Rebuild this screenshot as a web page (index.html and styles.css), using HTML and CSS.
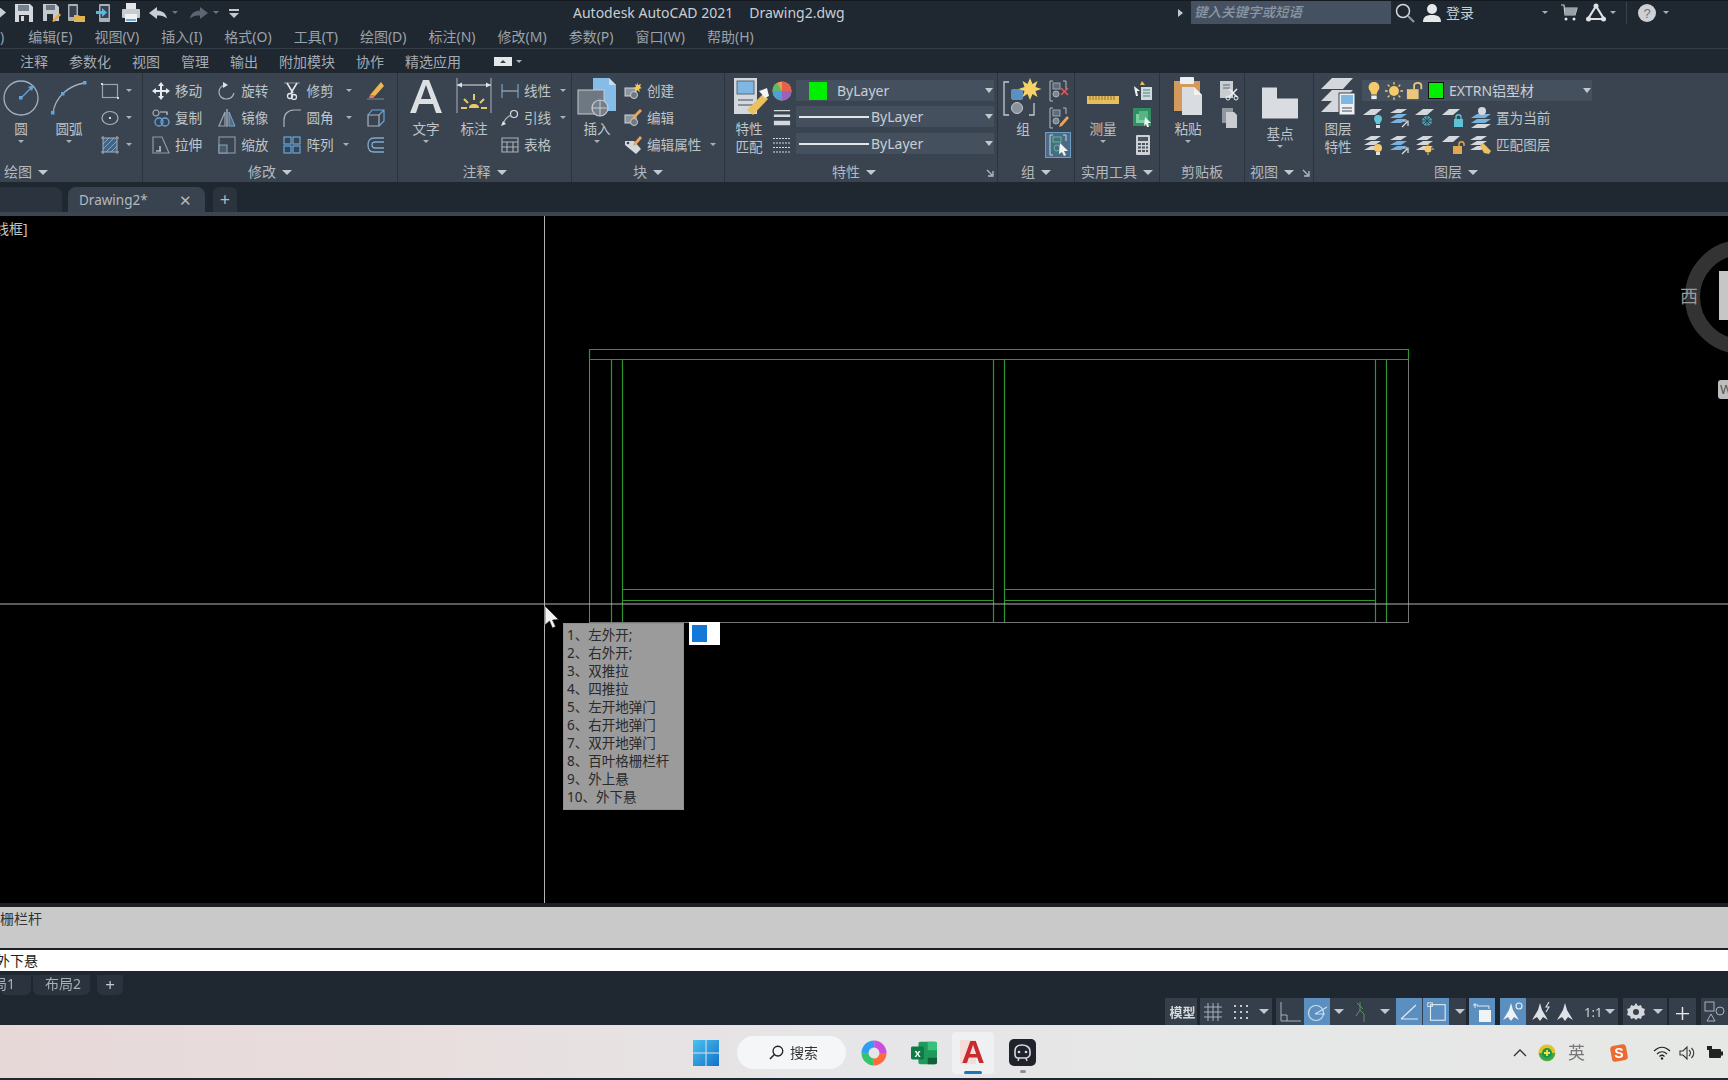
FILE: index.html
```html
<!DOCTYPE html>
<html lang="zh-CN">
<head>
<meta charset="utf-8">
<title>Autodesk AutoCAD 2021</title>
<link rel="stylesheet" href="styles.css">
</head>
<body>
<svg class="defs" aria-hidden="true">
<defs>
<symbol id="save" viewBox="0 0 20 20"><path d="M1 1h15l3 3v15H1z" fill="#d4d8dc"/><rect x="4" y="2" width="11" height="6" fill="#77818c"/><rect x="5" y="12" width="10" height="7" fill="#252c34"/><rect x="7" y="13" width="3" height="5" fill="#d4d8dc"/></symbol>
<symbol id="saveas" viewBox="0 0 20 20"><path d="M1 1h13l3 3v14H1z" fill="#c4c9ce"/><rect x="4" y="2" width="9" height="5" fill="#6c7682"/><rect x="5" y="11" width="6" height="7" fill="#252c34"/><path d="M10 18l7-8 2 2-7 7z" fill="#e8a94c"/></symbol>
<symbol id="phonef" viewBox="0 0 20 20"><rect x="2" y="1" width="10" height="17" rx="1" fill="#aab0b6"/><rect x="3.500" y="3" width="7" height="11" fill="#39434f"/><path d="M8 12h4l2 1h5v6H8z" fill="#e0b354"/></symbol>
<symbol id="phonea" viewBox="0 0 20 20"><rect x="5" y="1" width="11" height="18" rx="1" fill="#aab0b6"/><rect x="6.500" y="3" width="8" height="12" fill="#39434f"/><path d="M2 8h6V5l5 4.500-5 4.500v-3H2z" fill="#59b7e4"/></symbol>
<symbol id="print" viewBox="0 0 20 20"><rect x="5" y="0" width="10" height="6" fill="#e4e7ea"/><rect x="1" y="6" width="18" height="9" rx="1" fill="#c6cbd0"/><rect x="4" y="11" width="12" height="8" fill="#eef0f2"/><rect x="5" y="16" width="10" height="2" fill="#6aa9d8"/></symbol>
<symbol id="undo" viewBox="0 0 20 14"><path d="M9 1L1 7l8 6V9.500c4 0 7 .5 10 3-1-5-4-7.500-10-8z" fill="#c9ced3"/></symbol>
<symbol id="redo" viewBox="0 0 20 14"><path d="M11 1l8 6-8 6V9.500c-4 0-7 .5-10 3 1-5 4-7.500 10-8z" fill="#5c6570"/></symbol>
<symbol id="circle" viewBox="0 0 36 36"><circle cx="18" cy="18" r="17" fill="none" stroke="#9fb0be" stroke-width="1.300"/><path d="M18 18L30 6" stroke="#5ea6dc" stroke-width="1.300"/><path d="M31 5l-2 6-4-4z" fill="#5ea6dc"/><rect x="16" y="16" width="3.500" height="3.500" fill="#5ea6dc"/></symbol>
<symbol id="arc" viewBox="0 0 36 36"><path d="M2 33C4 18 16 6 33 3" fill="none" stroke="#9fb0be" stroke-width="1.300"/><g fill="#5ea6dc"><rect x="0" y="31" width="3.500" height="3.500"/><rect x="10" y="12" width="3.500" height="3.500"/><rect x="32" y="1" width="3.500" height="3.500"/></g></symbol>
<symbol id="rect" viewBox="0 0 18 18"><rect x="1.500" y="2.500" width="15" height="13" fill="none" stroke="#9ba4ad" stroke-width="1.200"/><g fill="#d5d9dd"><rect x="0" y="1" width="2" height="2"/><rect x="16" y="15" width="2" height="2"/></g></symbol>
<symbol id="ell" viewBox="0 0 18 18"><ellipse cx="9" cy="9" rx="8" ry="6.500" fill="none" stroke="#aab2ba" stroke-width="1.200"/><rect x="8" y="8" width="2" height="2" fill="#d5d9dd"/></symbol>
<symbol id="hatch" viewBox="0 0 18 18"><rect x="2" y="2" width="14" height="14" fill="#3f6486"/><path d="M2 8l6-6M2 13L13 2M5 16L16 5M10 16l6-6" stroke="#7fa8cb" stroke-width="1"/><path d="M2 0v18M16 0v18M0 2h18M0 16h18" stroke="#a9b1b9" stroke-width="1"/></symbol>
<symbol id="move" viewBox="0 0 18 18"><path d="M9 0l3 4h-2v4h4V6l4 3-4 3v-2h-4v4h2l-3 4-3-4h2v-4H4v2L0 9l4-3v2h4V4H6z" fill="#e8eaec"/></symbol>
<symbol id="copy" viewBox="0 0 18 18"><rect x="1" y="1" width="6" height="6" rx="3" fill="none" stroke="#a7afb7" stroke-width="1.200"/><path d="M8 3h7v3" fill="none" stroke="#c9ced3" stroke-width="1.200"/><circle cx="7" cy="13" r="4" fill="none" stroke="#64a7dc" stroke-width="1.300"/><circle cx="13" cy="13" r="4" fill="none" stroke="#64a7dc" stroke-width="1.300"/></symbol>
<symbol id="stretch" viewBox="0 0 18 18"><path d="M1 1h9l7 16H1z" fill="none" stroke="#8f99a3" stroke-width="1.200"/><path d="M4 15h5M8 10v5" stroke="#dfe2e5" stroke-width="1.200"/></symbol>
<symbol id="rotate" viewBox="0 0 18 18"><path d="M7 3C3 4 1 7 1 10c0 4 3 7 7 7 4 0 7-2 8-6" fill="none" stroke="#aab2ba" stroke-width="1.200"/><path d="M5 0l5 3-5 3z" fill="#dfe2e5"/></symbol>
<symbol id="mirror" viewBox="0 0 18 18"><path d="M7 3L1 17h6z" fill="none" stroke="#9ca6af" stroke-width="1.200"/><path d="M11 3l6 14h-6z" fill="#566c80" stroke="#7aa9d0" stroke-width="1"/><path d="M9 0v18" stroke="#d5d9dd" stroke-width="1"/></symbol>
<symbol id="scale" viewBox="0 0 18 18"><rect x="1" y="1" width="16" height="16" fill="none" stroke="#89939d" stroke-width="1.200"/><rect x="1" y="9" width="8" height="8" fill="#4b5a69" stroke="#89a5bf" stroke-width="1"/></symbol>
<symbol id="trim" viewBox="0 0 18 18"><path d="M1 1h16" stroke="#8f99a3"/><path d="M4 1l6 10M14 1L8 11" stroke="#e2e5e8" stroke-width="1.600"/><circle cx="7" cy="14" r="2.500" fill="none" stroke="#e2e5e8" stroke-width="1.300"/><circle cx="11" cy="15" r="2.500" fill="none" stroke="#e2e5e8" stroke-width="1.300"/></symbol>
<symbol id="fillet" viewBox="0 0 18 18"><path d="M1 18V11C1 5 5 1 11 1h7" fill="none" stroke="#aab2ba" stroke-width="1.200"/></symbol>
<symbol id="array" viewBox="0 0 18 18"><g fill="none" stroke="#64a7dc" stroke-width="1.200"><rect x="1" y="1" width="7" height="7"/><rect x="10" y="1" width="7" height="7"/><rect x="1" y="10" width="7" height="7"/><rect x="10" y="10" width="7" height="7"/></g></symbol>
<symbol id="eraser" viewBox="0 0 18 18"><path d="M14 0l3 4-9 10-5-1z" fill="#f0b54e"/><path d="M3 13l5 1-2 2H2z" fill="#e9766a"/><path d="M0 17h17" stroke="#7e8790"/></symbol>
<symbol id="cube" viewBox="0 0 18 18"><path d="M1 6h11v11H1z" fill="none" stroke="#aab2ba" stroke-width="1.200"/><path d="M1 6l4-5h12v11l-5 5M12 6l5-5" fill="none" stroke="#64a7dc" stroke-width="1.200"/></symbol>
<symbol id="offset" viewBox="0 0 18 18"><path d="M17 2H7C3 2 1 5 1 9s2 7 6 7h10M17 6H8c-2 0-3 1-3 3s1 3 3 3h9" fill="none" stroke="#7fa9cc" stroke-width="1.300"/></symbol>
<symbol id="txtA" viewBox="0 0 40 40"><path d="M17 3h6l13 33h-6l-3-9H13l-3 9H4zM15 22h10L20 8z" fill="#dde0e3" fill-rule="evenodd"/></symbol>
<symbol id="dim" viewBox="0 0 40 40"><path d="M3 1v35M37 1v35" stroke="#aab2ba"/><path d="M3 8h34" stroke="#dfe2e5"/><path d="M3 8l5-2.500v5zM37 8l-5-2.500v5z" fill="#dfe2e5"/><g stroke="#ecc766" stroke-width="2"><path d="M20 17v6M10 22l4 4M30 22l-4 4M7 31h6M27 31h6"/></g><path d="M15 31c0-3 2-4 5-4s5 1 5 4z" fill="#ecc766"/></symbol>
<symbol id="lin" viewBox="0 0 18 18"><path d="M1 2v14M17 2v14" stroke="#72a4cc" stroke-width="1.200"/><path d="M1 9h16" stroke="#a7afb7" stroke-width="1.200"/></symbol>
<symbol id="leader" viewBox="0 0 18 18"><circle cx="13" cy="5" r="3.500" fill="none" stroke="#dfe2e5" stroke-width="1.200"/><path d="M2 16c1-5 4-8 8-10" fill="none" stroke="#aab2ba" stroke-width="1.200"/><path d="M0 17l2-5 3 3z" fill="#dfe2e5"/></symbol>
<symbol id="table" viewBox="0 0 18 18"><path d="M1 2h16v14H1zM1 6h16M1 11h16M6 6v10M12 6v10" fill="none" stroke="#aab2ba" stroke-width="1.100"/></symbol>
<symbol id="insert" viewBox="0 0 44 40"><path d="M18 1h16l7 7v26H18z" fill="#86bce8"/><path d="M34 1l7 7h-7z" fill="#c4dff4"/><rect x="3" y="13" width="26" height="24" fill="#6e7882" stroke="#c5cad0"/><circle cx="25" cy="31" r="8" fill="#757f89" stroke="#c9ced3" stroke-width="1.200"/><path d="M25 23v16M17 31h16" stroke="#c9ced3"/></symbol>
<symbol id="create" viewBox="0 0 18 18"><rect x="1" y="6" width="11" height="8" fill="#8c959e" stroke="#d0d4d8"/><circle cx="10" cy="13" r="3.500" fill="#6f7882" stroke="#c9ced3"/><path d="M13 0l1 3 3-1-1 3 2 1-3 1 1 3-3-2-2 2V7l-2-1 3-1-1-3 2 1z" fill="#f6ca58"/></symbol>
<symbol id="editb" viewBox="0 0 18 18"><rect x="1" y="6" width="11" height="8" fill="#8c959e" stroke="#d0d4d8"/><circle cx="10" cy="13" r="3.500" fill="#6f7882" stroke="#c9ced3"/><path d="M16 0l2 2-7 7-3 1 1-3z" fill="#eea55a"/></symbol>
<symbol id="attr" viewBox="0 0 18 18"><path d="M1 5h9l7 8-5 5-11-9z" fill="#d4d8dc"/><circle cx="4" cy="7" r="1.300" fill="#39434f"/><path d="M16 0l2 2-6 7-3 1 1-3z" fill="#eea55a"/></symbol>
<symbol id="match" viewBox="0 0 36 40"><rect x="1" y="1" width="23" height="36" fill="#d4d8dc"/><rect x="4" y="4" width="17" height="13" fill="#7fb7e4" stroke="#5a6672"/><path d="M5 23h15M5 28h15" stroke="#444d57"/><path d="M14 33l16-16 5 5-15 16z" fill="#eac061"/><path d="M26 14l8-3 2 8-4 2z" fill="#f4f5f6"/></symbol>
<symbol id="wheel" viewBox="0 0 20 20"><circle cx="10" cy="10" r="9.500" fill="#e9a14c"/><path d="M10 10V.5A9.500 9.500 0 0 1 19.500 10z" fill="#e5604f"/><path d="M10 10h9.500A9.500 9.500 0 0 1 10 19.500z" fill="#9a62b8"/><path d="M10 10v9.500A9.500 9.500 0 0 1 .5 10z" fill="#4d9fd8"/><path d="M10 10H.5A9.500 9.500 0 0 1 5 1.800z" fill="#5fb86a"/></symbol>
<symbol id="lw" viewBox="0 0 18 20"><path d="M0 1h18v1.500H0zM0 6h18v3H0zM0 13h18v5H0z" fill="#d4d8dc"/></symbol>
<symbol id="lt" viewBox="0 0 18 16"><path d="M0 1.500h18M0 6h18M0 10.500h18M0 15h18" stroke="#d4d8dc" stroke-dasharray="2 1"/></symbol>
<symbol id="group" viewBox="0 0 40 40"><path d="M6 5H1v33h5M26 38h5v-12" fill="none" stroke="#c4c9ce" stroke-width="1.300"/><rect x="8" y="12" width="12" height="11" rx="2" fill="#5c90c0"/><circle cx="14" cy="31" r="5.500" fill="#8a939c" stroke="#c4c9ce"/><path d="M27 1l2.500 6 5-3-2 6 6 2-6 2 2 6-5-3-2.500 6-2.500-6-5 3 2-6-6-2 6-2-2-6 5 3z" fill="#f6d167"/></symbol>
<symbol id="gungrp" viewBox="0 0 24 24"><path d="M7 2H4v20h3M17 2h3v8" fill="none" stroke="#b4bac0"/><rect x="7" y="4" width="7" height="6" fill="#5a6b7c" stroke="#9ba4ad"/><circle cx="10" cy="15" r="3" fill="#7d8690" stroke="#a9b1b8"/><path d="M15 9l7 7M22 9l-7 7" stroke="#e05757" stroke-width="1.600"/></symbol>
<symbol id="editgrp" viewBox="0 0 24 24"><path d="M7 2H4v20h3M17 2h3v6" fill="none" stroke="#b4bac0"/><rect x="7" y="4" width="7" height="6" fill="#5a6b7c" stroke="#9ba4ad"/><circle cx="10" cy="15" r="3" fill="#7d8690" stroke="#a9b1b8"/><path d="M21 10l2 2-7 8-3 1 1-3z" fill="#eea55a"/></symbol>
<symbol id="selgrp" viewBox="0 0 24 24"><path d="M7 2H4v20h3M17 2h3v6" fill="none" stroke="#c4d4df"/><rect x="7" y="4" width="8" height="5" fill="none" stroke="#58bf8a"/><circle cx="11" cy="15" r="3" fill="none" stroke="#58bf8a"/><path d="M14 10l8 8-4 0 2 4-2 1-2-4-3 2z" fill="#f2f3f4"/></symbol>
<symbol id="ruler" viewBox="0 0 32 8"><rect width="32" height="8" fill="#e8bd5e"/><path d="M3 0v4M6 0v4M9 0v4M12 0v4M15 0v4M18 0v4M21 0v4M24 0v4M27 0v4" stroke="#8e7232"/></symbol>
<symbol id="qsel" viewBox="0 0 20 20"><rect x="8" y="6" width="11" height="13" fill="#d4d8dc"/><path d="M10 9h7M10 12h7M10 15h7" stroke="#2e8f7c"/><path d="M1 5l6 5-3 0 1 5-2 0-1-4z" fill="#eef0f2"/><path d="M9 0l-2 4 5 0z" fill="#e8bd5e"/></symbol>
<symbol id="qlist" viewBox="0 0 20 20"><rect x="0" y="0" width="18" height="18" fill="#2f8f63"/><rect x="3" y="6" width="9" height="9" fill="#7ad0a2"/><rect x="6" y="3" width="9" height="9" fill="#58b484"/><path d="M12 9l6 6-3 0 1 4-2 0-1-3-2 2z" fill="#f2f3f4"/></symbol>
<symbol id="calc" viewBox="0 0 20 20"><rect x="3" y="0" width="14" height="20" rx="1" fill="#cdd1d5"/><rect x="5" y="2" width="10" height="4" fill="#4c5560"/><path d="M5 9h3M9 9h3M13 9h2M5 12.500h3M9 12.500h3M13 12.500h2M5 16h3M9 16h3M13 16h2" stroke="#4c5560" stroke-width="2"/></symbol>
<symbol id="paste" viewBox="0 0 36 40"><rect x="4" y="4" width="26" height="30" fill="#d49a5c"/><rect x="10" y="0" width="14" height="7" rx="1" fill="#eceef0"/><path d="M12 10h12l8 8v20H12z" fill="#d9dce0"/><path d="M24 10l8 8h-8z" fill="#f0f2f3"/></symbol>
<symbol id="cut" viewBox="0 0 20 20"><rect x="1" y="0" width="13" height="17" fill="#c9cdd2"/><path d="M4 4h7M4 7h7" stroke="#5b6570"/><path d="M10 8l8 8M18 8l-8 8" stroke="#eef0f2" stroke-width="1.500"/><circle cx="9" cy="17" r="2" fill="none" stroke="#eef0f2"/><circle cx="17" cy="17" r="2" fill="none" stroke="#eef0f2"/></symbol>
<symbol id="copyc" viewBox="0 0 20 20"><rect x="3" y="0" width="11" height="15" fill="#8f98a1"/><path d="M7 4h8l3 3v13H7z" fill="#c9cdd2"/></symbol>
<symbol id="base" viewBox="0 0 40 44"><path d="M2 10h15v11h21v20H2z" fill="#d9dce0"/></symbol>
<symbol id="lprops" viewBox="0 0 40 40"><g fill="#d4d8dc"><path d="M14 1h21l-10 11H3z"/><path d="M14 13h21l-10 11H3z"/><path d="M14 24h21l-10 11H3z"/></g><rect x="21" y="16" width="16" height="22" fill="#eef0f2" stroke="#3a4450"/><rect x="23" y="18" width="12" height="9" fill="#7fb7e4"/><path d="M24 31h10M24 34h10" stroke="#444d57"/></symbol>
<symbol id="corner" viewBox="0 0 8 8"><path d="M1 1l5 5M7 2v5H2" fill="none" stroke="#b4b9bf" stroke-width="1.300"/></symbol>
<symbol id="l-blue" viewBox="0 0 26 24"><g fill="#d4d8dc"><path d="M10 3h10l-6 4H3z"/></g><g fill="#79b2de"><path d="M10 8h10l-6 4H3z"/><path d="M10 13h10l-6 4H3z"/></g><path d="M15 21l5-5M16 15h5v5" fill="none" stroke="#dfe2e5" stroke-width="1.200"/></symbol>
<symbol id="l-bulb-b" viewBox="0 0 26 24"><path d="M10 3h11l-7 6H2z" fill="#d4d8dc"/><path d="M17 9c3 0 4 2 4 4 0 2-2 3-2 5h-4c0-2-2-3-2-5 0-2 1-4 4-4z" fill="#63c4d8"/><rect x="15" y="19" width="4" height="3" fill="#dfe2e5"/></symbol>
<symbol id="l-fl" viewBox="0 0 26 24"><path d="M10 3h11l-7 6H2z" fill="#d4d8dc"/><circle cx="14" cy="15" r="5" fill="#47a5b8"/><path d="M14 9v12M8 15h12M10 11l8 8M18 11l-8 8" stroke="#39434f"/></symbol>
<symbol id="l-lock-b" viewBox="0 0 26 24"><path d="M8 3h11l-7 6H1z" fill="#d4d8dc"/><rect x="13" y="13" width="9" height="8" fill="#5fc1d6"/><path d="M15 13v-2c0-3 5-3 5 0v2" fill="none" stroke="#5fc1d6" stroke-width="1.400"/></symbol>
<symbol id="l-user" viewBox="0 0 26 24"><g fill="#79b2de"><path d="M8 8h14l-6 4H2z"/><path d="M8 13h14l-6 4H2z"/></g><path d="M8 18h14l-6 4H2z" fill="#d4d8dc"/><circle cx="13" cy="5" r="4" fill="#d4d8dc"/></symbol>
<symbol id="l-bulb-y" viewBox="0 0 26 24"><g fill="#d4d8dc"><path d="M10 3h10l-6 4H3z"/><path d="M10 8h10l-6 4H3z"/><path d="M10 13h10l-6 4H3z"/></g><circle cx="17" cy="15" r="4" fill="#f6ca6b"/><rect x="15" y="19" width="4" height="3" fill="#dfe2e5"/></symbol>
<symbol id="l-sun" viewBox="0 0 26 24"><g fill="#d4d8dc"><path d="M10 3h10l-6 4H3z"/><path d="M10 8h10l-6 4H3z"/><path d="M10 13h10l-6 4H3z"/></g><circle cx="15" cy="16" r="3.500" fill="#f6ca6b"/><path d="M15 10v2M15 20v2M9 16h2M19 16h2" stroke="#f6ca6b"/></symbol>
<symbol id="l-lock-o" viewBox="0 0 26 24"><path d="M8 3h11l-7 6H1z" fill="#d4d8dc"/><rect x="12" y="13" width="9" height="8" fill="#e3a652"/><path d="M18 13v-2c0-3 5-3 5 0v2" fill="none" stroke="#e3a652" stroke-width="1.400"/></symbol>
<symbol id="l-pen" viewBox="0 0 26 24"><g fill="#d4d8dc"><path d="M8 3h10l-6 4H1z"/><path d="M8 8h10l-6 4H1z"/><path d="M8 13h10l-6 4H1z"/></g><path d="M11 13l3-3 8 8-2 3-5-1z" fill="#eac061"/></symbol>
<symbol id="sun" viewBox="0 0 20 20"><circle cx="10" cy="10" r="5.500" fill="#f6ca6b"/><path d="M10 0v3M10 17v3M0 10h3M17 10h3M3 3l2 2M15 15l2 2M3 17l2-2M15 5l2-2" stroke="#f6ca6b" stroke-width="1.400"/></symbol>
<symbol id="bulb" viewBox="0 0 20 20"><path d="M10 0c4 0 6 3 6 6 0 3-3 4-3 8H7c0-4-3-5-3-8 0-3 2-6 6-6z" fill="#f6ca6b"/><rect x="7" y="15" width="6" height="4" fill="#eef0f2"/></symbol>
<symbol id="lock" viewBox="0 0 20 20"><rect x="1" y="8" width="13" height="11" fill="#eac77c"/><path d="M9 8V4c0-4 8-4 8 0v4" fill="none" stroke="#eac77c" stroke-width="2"/></symbol>
<symbol id="help" viewBox="0 0 20 20"><circle cx="10" cy="10" r="9" fill="#cdd1d5"/><text x="10" y="15" text-anchor="middle" font-size="13" font-family="Liberation Sans" fill="#6a727b">?</text></symbol>
<symbol id="user" viewBox="0 0 20 20"><circle cx="10" cy="6" r="5" fill="#e6e8ea"/><path d="M1 19c0-6 4-7 9-7s9 1 9 7z" fill="#e6e8ea"/></symbol>
<symbol id="mag" viewBox="0 0 20 20"><circle cx="8" cy="8" r="6.500" fill="none" stroke="#d4d8dc" stroke-width="1.500"/><path d="M13 13l6 6" stroke="#8b939b" stroke-width="2.200"/></symbol>
<symbol id="cart" viewBox="0 0 18 18"><path d="M1 1h3l1 10h10l2-7H5" fill="none" stroke="#c6cbd0" stroke-width="1.200"/><path d="M5 4h12l-2 7H5z" fill="#98a0a8"/><circle cx="6" cy="15" r="1.500" fill="#e2e5e8"/><circle cx="14" cy="15" r="1.500" fill="#e2e5e8"/></symbol>
<symbol id="a360" viewBox="0 0 20 20"><path d="M10 3L2 16h16z" fill="none" stroke="#dfe2e5" stroke-width="2.200"/><circle cx="10" cy="3" r="2.500" fill="#dfe2e5"/><circle cx="2.500" cy="16" r="2.500" fill="#dfe2e5"/><circle cx="17.500" cy="16" r="2.500" fill="#dfe2e5"/></symbol>
<symbol id="s-grid" viewBox="0 0 20 20"><path d="M5 1v18M10 1v18M15 1v18M1 5h18M1 10h18M1 15h18" stroke="#aab2ba"/></symbol>
<symbol id="s-snap" viewBox="0 0 20 20"><path d="M3 3h2v2H3zM9 3h2v2H9zM15 3h2v2h-2zM3 9h2v2H3zM9 9h2v2H9zM15 9h2v2h-2zM3 15h2v2H3zM9 15h2v2H9zM15 15h2v2h-2z" fill="#c4c9ce"/></symbol>
<symbol id="s-ortho" viewBox="0 0 22 22"><path d="M2 1v19h20M2 14h6v6" fill="none" stroke="#aab2ba"/></symbol>
<symbol id="s-polar" viewBox="0 0 22 22"><circle cx="10" cy="12" r="7.500" fill="none" stroke="#cfe0ee" stroke-width="1.200"/><path d="M9 13L21 6M9 13h10" stroke="#cfe0ee" stroke-width="1.200"/></symbol>
<symbol id="s-iso" viewBox="0 0 22 22"><path d="M10 1v8l-4 6M10 9l4 4v8M7 2l6 6" stroke="#5d8f68" fill="none"/></symbol>
<symbol id="s-ang" viewBox="0 0 22 22"><path d="M3 18L18 4M3 18h17" stroke="#dfeaf3" fill="none" stroke-width="1.200"/></symbol>
<symbol id="s-box" viewBox="0 0 24 22"><rect x="6" y="3" width="16" height="17" fill="none" stroke="#dfeaf3" stroke-width="1.200"/><rect x="3" y="1" width="5" height="4" fill="none" stroke="#dfeaf3"/></symbol>
<symbol id="s-sel" viewBox="0 0 20 20"><path d="M1 3h5M3 1v5" stroke="#dfeaf3"/><path d="M5 4h12v3" stroke="#dfeaf3" fill="none"/><rect x="7" y="8" width="12" height="12" fill="#f0f3f5"/></symbol>
<symbol id="s-anno" viewBox="0 0 22 22"><path d="M9 2l2 7 6 10-5-3-3 4-3-4-5 3 6-10z" fill="#dfe3e7"/></symbol>
<symbol id="s-anno-c" viewBox="0 0 22 22"><path d="M9 2l2 7 6 10-5-3-3 4-3-4-5 3 6-10z" fill="#eef2f5"/><circle cx="17" cy="5" r="3" fill="none" stroke="#eef2f5" stroke-width="1.100"/></symbol>
<symbol id="s-anno-z" viewBox="0 0 22 22"><path d="M9 2l2 7 6 10-5-3-3 4-3-4-5 3 6-10z" fill="#dfe3e7"/><path d="M18 1l-3 5h3l-3 5" fill="none" stroke="#dfe3e7" stroke-width="1.100"/></symbol>
<symbol id="s-gear" viewBox="0 0 20 20"><path d="M10 1l2 3 3-1 1 3 3 1-1 3 1 3-3 1-1 3-3-1-2 2-2-2-3 1-1-3-3-1 1-3-1-3 3-1 1-3 3 1z" fill="#d4d8dc"/><circle cx="10" cy="10" r="3" fill="#36404c"/></symbol>
<symbol id="s-shape" viewBox="0 0 22 22"><rect x="1" y="1" width="9" height="9" fill="none" stroke="#aab2ba"/><circle cx="16" cy="10" r="4" fill="none" stroke="#aab2ba"/><path d="M7 13l4 7H3z" fill="none" stroke="#aab2ba"/></symbol>
</defs>
</svg>

<div class="app">
  <header class="titlebar">
    <div class="qat">
      <span class="frag"></span>
      <svg class="qi"><use href="#save"/></svg>
      <svg class="qi"><use href="#saveas"/></svg>
      <svg class="qi qi-pull"><use href="#phonef"/></svg>
      <svg class="qi"><use href="#phonea"/></svg>
      <svg class="qi qi-tight"><use href="#print"/></svg>
      <svg class="qu"><use href="#undo"/></svg><i class="car car-sm dim undo-car"></i>
      <svg class="qu"><use href="#redo"/></svg><i class="car car-sm dim"></i>
      <span class="qmore"></span>
    </div>
    <div class="apptitle"><span>Autodesk AutoCAD 2021</span><span>Drawing2.dwg</span></div>
    <div class="tright">
      <i class="tri-r"></i>
      <div class="searchbox">键入关键字或短语</div>
      <svg class="i20 mag"><use href="#mag"/></svg>
      <svg class="i20 usr"><use href="#user"/></svg>
      <span class="login">登录</span>
      <i class="car car-sm login-car"></i>
      <svg class="i18 crt"><use href="#cart"/></svg>
      <svg class="i20 a3"><use href="#a360"/></svg>
      <i class="car car-sm a3-car"></i>
      <span class="tsep"></span>
      <svg class="i20 hlp"><use href="#help"/></svg>
      <i class="car car-sm hlp-car"></i>
    </div>
  </header>

  <nav class="menubar">
    <span class="menu-frag">)</span><span>编辑(E)</span><span>视图(V)</span><span>插入(I)</span><span>格式(O)</span><span>工具(T)</span><span>绘图(D)</span><span>标注(N)</span><span>修改(M)</span><span>参数(P)</span><span>窗口(W)</span><span>帮助(H)</span>
  </nav>

  <nav class="ribbontabs">
    <span>注释</span><span>参数化</span><span>视图</span><span>管理</span><span>输出</span><span>附加模块</span><span>协作</span><span>精选应用</span>
    <span class="tabpill"><i></i></span><i class="car car-sm"></i>
  </nav>

  <section class="ribbon">
    <div class="panel p-draw">
      <div class="pbody">
        <div class="big"><svg class="bigi"><use href="#circle" width="36" height="36" x="2" y="3"/></svg><b>圆</b><i class="car car-sm"></i></div>
        <div class="big ml8"><svg class="bigi"><use href="#arc" width="36" height="36" x="2" y="3"/></svg><b>圆弧</b><i class="car car-sm"></i></div>
        <div class="rows ml12">
          <div class="r"><svg class="i18"><use href="#rect"/></svg><i class="car car-sm ml7"></i></div>
          <div class="r"><svg class="i18"><use href="#ell"/></svg><i class="car car-sm ml7"></i></div>
          <div class="r"><svg class="i18"><use href="#hatch"/></svg><i class="car car-sm ml7"></i></div>
        </div>
      </div>
      <div class="ptitle left"><span>绘图</span><i class="car"></i></div>
    </div>
    <div class="panel p-mod">
      <div class="pbody">
        <div class="rows">
          <div class="r"><svg class="i18"><use href="#move"/></svg><span>移动</span></div>
          <div class="r"><svg class="i18"><use href="#copy"/></svg><span>复制</span></div>
          <div class="r"><svg class="i18"><use href="#stretch"/></svg><span>拉伸</span></div>
        </div>
        <div class="rows ml16">
          <div class="r"><svg class="i18"><use href="#rotate"/></svg><span>旋转</span></div>
          <div class="r"><svg class="i18"><use href="#mirror"/></svg><span>镜像</span></div>
          <div class="r"><svg class="i18"><use href="#scale"/></svg><span>缩放</span></div>
        </div>
        <div class="rows ml15">
          <div class="r"><svg class="i18"><use href="#trim"/></svg><span>修剪</span><i class="car car-sm ml12"></i></div>
          <div class="r"><svg class="i18"><use href="#fillet"/></svg><span>圆角</span><i class="car car-sm ml12"></i></div>
          <div class="r"><svg class="i18"><use href="#array"/></svg><span>阵列</span><i class="car car-sm ml9"></i></div>
        </div>
        <div class="rows ml15">
          <div class="r"><svg class="i18"><use href="#eraser"/></svg></div>
          <div class="r"><svg class="i18"><use href="#cube"/></svg></div>
          <div class="r"><svg class="i18"><use href="#offset"/></svg></div>
        </div>
      </div>
      <div class="ptitle"><span>修改</span><i class="car"></i></div>
    </div>
    <div class="panel p-ann">
      <div class="pbody">
        <div class="big"><svg class="bigi"><use href="#txtA"/></svg><b>文字</b><i class="car car-sm"></i></div>
        <div class="big ml8"><svg class="bigi"><use href="#dim"/></svg><b>标注</b></div>
        <div class="rows ml7">
          <div class="r"><svg class="i18"><use href="#lin"/></svg><span>线性</span><i class="car car-sm ml9"></i></div>
          <div class="r"><svg class="i18"><use href="#leader"/></svg><span>引线</span><i class="car car-sm ml9"></i></div>
          <div class="r"><svg class="i18"><use href="#table"/></svg><span>表格</span></div>
        </div>
      </div>
      <div class="ptitle"><span>注释</span><i class="car"></i></div>
    </div>
    <div class="panel p-blk">
      <div class="pbody">
        <div class="big bw44"><svg class="bigi w44"><use href="#insert"/></svg><b>插入</b><i class="car car-sm"></i></div>
        <div class="rows ml5">
          <div class="r"><svg class="i18"><use href="#create"/></svg><span>创建</span></div>
          <div class="r"><svg class="i18"><use href="#editb"/></svg><span>编辑</span></div>
          <div class="r"><svg class="i18"><use href="#attr"/></svg><span>编辑属性</span><i class="car car-sm ml9"></i></div>
        </div>
      </div>
      <div class="ptitle"><span>块</span><i class="car"></i></div>
    </div>
    <div class="panel p-prop">
      <div class="pbody">
        <div class="big two"><svg class="bigi"><use href="#match" width="36" height="40" x="4"/></svg><b>特性<br>匹配</b></div>
        <div class="rows ml4">
          <div class="r"><svg class="i20 wheelfit"><use href="#wheel"/></svg></div>
          <div class="r"><svg class="i18"><use href="#lw"/></svg></div>
          <div class="r"><svg class="i18"><use href="#lt"/></svg></div>
        </div>
        <div class="rows ml3">
          <div class="r"><div class="combo c-prop"><i class="swatch"></i><span class="cname">ByLayer</span><i class="car combo-car"></i></div></div>
          <div class="r"><div class="combo c-prop up"><i class="cline"></i><span>ByLayer</span><i class="car combo-car"></i></div></div>
          <div class="r"><div class="combo c-prop up"><i class="cline"></i><span>ByLayer</span><i class="car combo-car"></i></div></div>
        </div>
      </div>
      <div class="ptitle withcorner title-prop"><span>特性</span><i class="car"></i><svg class="corner"><use href="#corner"/></svg></div>
    </div>
    <div class="panel p-grp">
      <div class="pbody">
        <div class="big"><svg class="bigi"><use href="#group"/></svg><b>组</b></div>
        <div class="rows ml3">
          <div class="r"><svg class="i24"><use href="#gungrp"/></svg></div>
          <div class="r"><svg class="i24"><use href="#editgrp"/></svg></div>
          <div class="r"><svg class="i24 active"><use href="#selgrp"/></svg></div>
        </div>
      </div>
      <div class="ptitle"><span>组</span><i class="car"></i></div>
    </div>
    <div class="panel p-utl">
      <div class="pbody">
        <div class="big"><svg class="bigi"><use href="#ruler" width="32" height="8" x="4" y="19"/></svg><b>测量</b><i class="car car-sm"></i></div>
        <div class="rows ml10">
          <div class="r"><svg class="i20"><use href="#qsel"/></svg></div>
          <div class="r"><svg class="i20"><use href="#qlist"/></svg></div>
          <div class="r"><svg class="i20"><use href="#calc"/></svg></div>
        </div>
      </div>
      <div class="ptitle"><span>实用工具</span><i class="car"></i></div>
    </div>
    <div class="panel p-clp">
      <div class="pbody">
        <div class="big bw36"><svg class="bigi w36"><use href="#paste"/></svg><b>粘贴</b><i class="car car-sm"></i></div>
        <div class="rows ml13">
          <div class="r"><svg class="i20"><use href="#cut"/></svg></div>
          <div class="r"><svg class="i20"><use href="#copyc"/></svg></div>
        </div>
      </div>
      <div class="ptitle"><span>剪贴板</span></div>
    </div>
    <div class="panel p-vw">
      <div class="pbody">
        <div class="big tall"><svg class="bigi h44"><use href="#base"/></svg><b>基点</b><i class="car car-sm"></i></div>
      </div>
      <div class="ptitle withcorner"><span>视图</span><i class="car"></i><svg class="corner"><use href="#corner"/></svg></div>
    </div>
    <div class="panel p-lay">
      <div class="pbody">
        <div class="big two"><svg class="bigi"><use href="#lprops"/></svg><b>图层<br>特性</b></div>
        <div class="rows ml3">
          <div class="r"><div class="combo c-lay">
            <svg class="i18 ml4"><use href="#bulb"/></svg>
            <svg class="i18 ml2"><use href="#sun"/></svg>
            <svg class="i18 ml3"><use href="#lock"/></svg>
            <i class="swatch sw-lay"></i><span class="layname">EXTRN铝型材</span><i class="car combo-car"></i>
          </div></div>
          <div class="r">
            <svg class="ly"><use href="#l-bulb-b"/></svg><svg class="ly"><use href="#l-blue"/></svg><svg class="ly"><use href="#l-fl"/></svg><svg class="ly ml2"><use href="#l-lock-b"/></svg><svg class="ly ml2"><use href="#l-user"/></svg><span class="lt">置为当前</span>
          </div>
          <div class="r">
            <svg class="ly"><use href="#l-bulb-y"/></svg><svg class="ly"><use href="#l-blue"/></svg><svg class="ly"><use href="#l-sun"/></svg><svg class="ly ml2"><use href="#l-lock-o"/></svg><svg class="ly ml2"><use href="#l-pen"/></svg><span class="lt">匹配图层</span>
          </div>
        </div>
      </div>
      <div class="ptitle left lay-title"><span>图层</span><i class="car"></i></div>
    </div>
  </section>

  <div class="doctabs">
    <span class="dtab-prev"></span>
    <span class="dtab"><span>Drawing2*</span><em>✕</em></span>
    <span class="dtab-add">+</span>
  </div>

  <main class="viewport">
    <svg class="canvas" viewBox="0 216 1728 687" width="1728" height="687">
      <g fill="none" stroke="#767676" stroke-width="1">
        <path d="M589.500 359.500V622M1408.500 359.500V622M589 622.500H1409"/>
      </g>
      <g fill="none" stroke="#2f9430" stroke-width="1.200">
        <path d="M589.500 359.500V349.500H1408.500V359.500H589.500"/>
        <path d="M611.500 359.500V622M622.500 359.500V622"/>
        <path d="M993.500 359.500V622M1004.500 359.500V622"/>
        <path d="M1375.500 359.500V622M1386.500 359.500V622"/>
        <path d="M622.500 589.500H993.500M622.500 600.500H993.500M1004.500 589.500H1375.500M1004.500 600.500H1375.500"/>
      </g>
      <path d="M544.500 216V903M0 604H1728" stroke="#b4b4b4" stroke-width="1"/>
      <circle cx="1742" cy="297" r="49.500" fill="none" stroke="#333" stroke-width="15"/>
      <rect x="1719" y="271" width="20" height="49" fill="#c6c6c6"/>
      <rect x="1718" y="380" width="20" height="19" rx="3" fill="#bdbdbd"/>
      <text class="w-label" x="1720" y="394">W</text>
      <text class="compass" x="1680" y="303">西</text>
      <path d="M545 606v19l4.500-4 3 7 3-1.500-3-6.500 6-.5z" fill="#f2f2f2" stroke="#222" stroke-width=".6"/>
    </svg>
    <div class="vp-label">线框]</div>
    <div class="dynlist">
      <div>1、左外开;</div><div>2、右外开;</div><div>3、双推拉</div><div>4、四推拉</div><div>5、左开地弹门</div><div>6、右开地弹门</div><div>7、双开地弹门</div><div>8、百叶格栅栏杆</div><div>9、外上悬</div><div>10、外下悬</div>
    </div>
    <div class="dynbox"><i></i></div>
  </main>

  <section class="cmd">
    <div class="cmd-hist">栅栏杆</div>
    <div class="cmd-input"><span>外下悬</span></div>
  </section>

  <section class="bottom">
    <div class="layouttabs">
      <span class="lt-tab first">局1</span><span class="lt-tab">布局2</span><span class="lt-add">+</span>
    </div>
    <div class="status">
      <div class="sg g-model"><span>模型</span></div>
      <div class="sg g-grid"><svg class="i20"><use href="#s-grid"/></svg><svg class="i20 ml8"><use href="#s-snap"/></svg><i class="car ml8"></i></div>
      <div class="sg g-draft">
        <svg class="s22 ml3"><use href="#s-ortho"/></svg>
        <span class="hl ml3"><svg class="s22"><use href="#s-polar"/></svg></span><i class="car ml4"></i>
        <svg class="s22 ml6"><use href="#s-iso"/></svg><i class="car ml8"></i>
        <span class="hl ml6"><svg class="s22"><use href="#s-ang"/></svg></span>
        <span class="hl ml1"><svg class="s22"><use href="#s-box"/></svg></span><i class="car ml6"></i>
      </div>
      <div class="sg g-sel"><span class="hl"><svg class="i20"><use href="#s-sel"/></svg></span></div>
      <div class="sg g-anno">
        <span class="hl"><svg class="s22"><use href="#s-anno-c"/></svg></span>
        <svg class="s22 ml5"><use href="#s-anno-z"/></svg>
        <svg class="s22 ml3"><use href="#s-anno"/></svg>
        <span class="ratio">1:1</span><i class="car ml3"></i>
      </div>
      <div class="sg g-gear"><svg class="i20 ml3"><use href="#s-gear"/></svg><i class="car ml7"></i></div>
      <div class="sg g-plus"><span>+</span></div>
      <div class="sg g-last"><svg class="s22"><use href="#s-shape"/></svg></div>
    </div>
  </section>

  <footer class="taskbar">
    <svg class="win" viewBox="0 0 26 26"><defs><linearGradient id="wg" x1="0" y1="0" x2="1" y2="1"><stop offset="0" stop-color="#4cc2f1"/><stop offset="1" stop-color="#0f72c8"/></linearGradient></defs><path d="M0 0h12.500v12.500H0zM13.500 0H26v12.500H13.500zM0 13.500h12.500V26H0zM13.500 13.500H26V26H13.500z" fill="url(#wg)"/></svg>
    <div class="tsearch"><svg class="tmag" viewBox="0 0 16 16"><circle cx="9.500" cy="6.500" r="5.200" fill="none" stroke="#222" stroke-width="1.400"/><path d="M5.500 10.500L1 15" stroke="#222" stroke-width="1.600"/></svg><span>搜索</span></div>
    <svg class="tapp ml15" viewBox="0 0 26 26"><circle cx="13" cy="13" r="9" fill="none" stroke="#ff6a3c" stroke-width="7" stroke-dasharray="14.200 60"/><circle cx="13" cy="13" r="9" fill="none" stroke="#35c46a" stroke-width="7" stroke-dasharray="14.200 60" stroke-dashoffset="-14.200"/><circle cx="13" cy="13" r="9" fill="none" stroke="#2f9df2" stroke-width="7" stroke-dasharray="14.200 60" stroke-dashoffset="-28.300"/><circle cx="13" cy="13" r="9" fill="none" stroke="#c94fe0" stroke-width="7" stroke-dasharray="14.200 60" stroke-dashoffset="-42.400"/></svg>
    <svg class="tapp ml24" viewBox="0 0 28 26"><rect x="8" y="1" width="20" height="24" rx="2" fill="#1f9a5a"/><path d="M18 1h8a2 2 0 0 1 2 2v7H18z" fill="#37c27a"/><path d="M18 18h10v5a2 2 0 0 1-2 2h-8z" fill="#125f38"/><rect x="0" y="6" width="14" height="14" rx="1.500" fill="#0e7a45"/><text class="xl" x="7" y="17" text-anchor="middle">x</text></svg>
    <div class="acad"><span class="acad-a">A</span><i></i></div>
    <div class="bili"><svg viewBox="0 0 27 27"><rect width="27" height="27" rx="5" fill="#20232b"/><path d="M6 12c0-4 3-6 7-6s8 2 8 6v3c0 2-2 4-4 4H9c-2 0-3-2-3-4z" fill="none" stroke="#d8dade" stroke-width="1.600"/><circle cx="10" cy="13" r="1.300" fill="#d8dade"/><circle cx="17" cy="13" r="1.300" fill="#d8dade"/><path d="M10 19l-1 3M17 19l1 3" stroke="#d8dade" stroke-width="1.400"/></svg><i></i></div>
    <div class="tray">
      <svg class="chev" viewBox="0 0 14 8"><path d="M1 7l6-6 6 6" fill="none" stroke="#333" stroke-width="1.300"/></svg>
      <svg class="t360" viewBox="0 0 18 18"><circle cx="9" cy="9" r="8.500" fill="#e0c326"/><path d="M1 9a8 8 0 0 0 16 0z" fill="#33a852"/><circle cx="9" cy="9" r="5" fill="#1c9646"/><path d="M9 6v6M6 9h6" stroke="#f2e34e" stroke-width="1.800"/></svg>
      <span class="ime">英</span>
      <svg class="sogou" viewBox="0 0 18 18"><rect x="1" y="1" width="16" height="16" rx="3" fill="#ec6b33" transform="rotate(-10 9 9)"/><text class="sg-s" x="9" y="14" text-anchor="middle">S</text></svg>
      <svg class="wifi" viewBox="0 0 18 14"><path d="M1 5c5-5 11-5 16 0M4 8c3-3 7-3 10 0M6.500 10.500c1.500-1.500 3.500-1.500 5 0" fill="none" stroke="#222" stroke-width="1.200"/><circle cx="9" cy="12.500" r="1.200" fill="#222"/></svg>
      <svg class="spk" viewBox="0 0 16 14"><path d="M1 5h3l4-4v12l-4-4H1z" fill="none" stroke="#333" stroke-width="1.100"/><path d="M10 4c2 2 2 4 0 6M12.500 2c3 3 3 7 0 10" fill="none" stroke="#333" stroke-width="1.100"/></svg>
      <svg class="bat" viewBox="0 0 18 16"><rect x="3" y="4" width="12" height="9" rx="1" fill="#222"/><rect x="15" y="6.500" width="2" height="4" fill="#222"/><rect x="1" y="1" width="5" height="4" fill="#222"/></svg>
    </div>
  </footer>
</div>
</body>
</html>
```
FILE: styles.css
```css
* { box-sizing: border-box; }
html, body { margin: 0; padding: 0; background: #000; }
body { width: 1728px; height: 1080px; overflow: hidden; font-family: "Noto Sans", "Noto Sans CJK SC", sans-serif; font-size: 14px; line-height: 18px; }
.defs { width: 0; height: 0; position: absolute; }
svg { display: block; flex: none; }
i, em, b { font-style: normal; font-weight: normal; }
.app { width: 1728px; height: 1080px; display: flex; flex-direction: column; background: #1f2730; filter: blur(.35px); }

/* utility margins */
.ml1 { margin-left: 1px; } .ml2 { margin-left: 2px; } .ml3 { margin-left: 3px; } .ml4 { margin-left: 4px; } .ml5 { margin-left: 5px; }
.ml6 { margin-left: 6px; } .ml7 { margin-left: 7px; } .ml8 { margin-left: 8px; } .ml9 { margin-left: 9px; } .ml10 { margin-left: 10px; }
.ml12 { margin-left: 12px; } .ml13 { margin-left: 13px; } .ml15 { margin-left: 15px; } .ml16 { margin-left: 16px; } .ml24 { margin-left: 24px; }

.car { display: inline-block; flex: none; width: 0; height: 0; border-left: 5px solid transparent; border-right: 5px solid transparent; border-top: 5px solid #c3c8cd; }
.car-sm { border-left-width: 3px; border-right-width: 3px; border-top-width: 3px; border-top-color: #aab0b6; }
.car.dim { border-top-color: #6d7680; }

.i18 { width: 18px; height: 18px; } .i20 { width: 20px; height: 20px; } .i24 { width: 24px; height: 24px; } .s22 { width: 22px; height: 22px; }

/* title bar */
.titlebar { height: 24px; display: flex; align-items: center; background: #1f2730; border-top: 1px solid #14191f; flex: none; }
.qat { width: 573px; display: flex; align-items: center; flex: none; }
.frag { width: 6px; height: 10px; margin-right: 8px; background: #c9ced3; clip-path: polygon(0 0, 100% 50%, 0 100%); }
.qi { width: 20px; height: 20px; margin-right: 8px; }
.qi-pull { margin-left: -4px; }
.qi-tight { margin-left: -1px; margin-right: 7px; }
.qu { width: 20px; height: 14px; }
.car-sm.dim { margin: 0 9px 0 4px; }
.car-sm.undo-car { margin-right: 11px; }
.qmore { width: 10px; height: 8px; margin-left: 1px; border-top: 2px solid #c3c8cd; position: relative; }
.qmore::after { content: ""; position: absolute; left: 0; top: 2px; border-left: 5px solid transparent; border-right: 5px solid transparent; border-top: 5px solid #c3c8cd; }
.apptitle { width: 603px; flex: none; display: flex; gap: 16px; color: #c9ced3; font-size: 14px; }
.tright { flex: 1; display: flex; align-items: center; height: 100%; }
.tri-r { margin-left: 2px; width: 0; height: 0; border-left: 5px solid #c3c8cd; border-top: 4px solid transparent; border-bottom: 4px solid transparent; }
.searchbox { width: 200px; height: 23px; margin-left: 8px; background: #455161; color: #8b97a4; font-style: italic; font-weight: 500; font-size: 13.500px; line-height: 22px; padding-left: 3px; }
.mag { margin-left: 4px; } .usr { margin-left: 7px; }
.login { color: #c9ced3; margin-left: 4px; }
.login-car { margin-left: 68px; }
.crt { margin-left: 12px; } .a3 { margin-left: 8px; } .a3-car { margin-left: 4px; }
.tsep { width: 1px; height: 22px; background: #39434f; margin-left: 10px; }
.hlp { margin-left: 10px; } .hlp-car { margin-left: 6px; }

/* menu */
.menubar { height: 25px; flex: none; display: flex; align-items: center; gap: 22px; color: #9ba2aa; border-bottom: 1px solid #343d48; padding-top: 1px; }
.menu-frag { margin-right: 2px; }
.ribbontabs { height: 24px; flex: none; display: flex; align-items: center; gap: 21px; padding-left: 20px; color: #a5abb2; padding-top: 1px; }
.tabpill { width: 18px; height: 9px; margin-left: 12px; background: #e4e6e8; display: flex; align-items: center; justify-content: center; }
.tabpill i { border-left: 3px solid transparent; border-right: 3px solid transparent; border-bottom: 3px solid #39434f; }
.ribbontabs .car-sm { margin-left: -17px; }

/* ribbon */
.ribbon { height: 109px; flex: none; display: flex; background: #3a4450; }
.panel { flex: none; display: flex; flex-direction: column; border-right: 1px solid #2a323c; color: #bfc4c9; font-size: 13.600px; }
.p-draw { width: 143px; } .p-mod { width: 255px; } .p-ann { width: 174px; } .p-blk { width: 153px; } .p-prop { width: 273px; }
.p-grp { width: 77px; } .p-utl { width: 85px; } .p-clp { width: 85px; } .p-vw { width: 69px; } .p-lay { flex: 1; border-right: 0; }
.pbody { height: 89px; display: flex; padding-top: 4px; }
.p-draw .pbody { padding-left: 1px; } .p-mod .pbody { padding-left: 9px; } .p-ann .pbody { padding-left: 8px; } .p-blk .pbody { padding-left: 3px; }
.p-prop .pbody { padding-left: 4px; } .p-grp .pbody { padding-left: 5px; } .p-utl .pbody { padding-left: 8px; } .p-clp .pbody { padding-left: 10px; }
.p-vw .pbody { padding-left: 15px; } .p-lay .pbody { padding-left: 4px; }
.ptitle { height: 20px; display: flex; align-items: center; justify-content: center; gap: 6px; color: #b4b9bf; font-size: 14px; }
.ptitle.left { justify-content: flex-start; padding-left: 4px; }
.withcorner { position: relative; }
.corner { position: absolute; right: 3px; top: 7px; width: 8px; height: 8px; }
.title-prop { padding-right: 14px; }
.p-vw .ptitle { padding-right: 14px; }
.ptitle.lay-title { padding-left: 120px; }
.big { width: 40px; display: flex; flex-direction: column; align-items: center; flex: none; }
.big b { display: block; margin-top: 3px; text-align: center; white-space: nowrap; }
.big .car { margin-top: 2px; }
.bigi { width: 40px; height: 40px; }
.bw44, .w44 { width: 44px; } .bw36, .w36 { width: 36px; }
.h44 { height: 45px; }
.rows { display: flex; flex-direction: column; flex: none; }
.r { height: 27px; display: flex; align-items: center; }
.r > span { margin-left: 5px; }
.wheelfit { margin-left: -1px; }
.active { background: #4a6a86; outline: 1px solid #6c9ec6; }

.combo { height: 23px; display: flex; align-items: center; background: #45505e; position: relative; color: #c9ced3; box-shadow: inset 0 0 0 1px #39424d; font-size: 14px; }
.combo.up { margin-bottom: 2px; }
.c-prop { width: 200px; }
.c-lay { width: 232px; }
.swatch { width: 18px; height: 18px; margin-left: 14px; background: #00f000; flex: none; }
.cname { margin-left: 10px; }
.cline { width: 70px; height: 2px; margin-left: 4px; margin-right: 2px; background: #e3e6e9; }
.combo-car { position: absolute; right: 2px; top: 9px; border-left-width: 4px; border-right-width: 4px; border-top-width: 5px; }
.sw-lay { width: 16px; height: 17px; margin-left: 4px; border: 1px solid #111; }
.layname { margin-left: 5px; }
.ly { width: 26px; height: 24px; }
.r > .lt { margin-left: 1px; }

/* doc tabs */
.doctabs { height: 34px; flex: none; display: flex; align-items: flex-end; background: #1f2730; border-bottom: 4px solid #3c4651; }
.dtab-prev { width: 62px; height: 25px; background: #2a333e; border-top-right-radius: 8px; }
.dtab { width: 137px; height: 25px; margin-left: 6px; background: #39434f; color: #b4b9bf; display: flex; align-items: center; padding-left: 11px; border-radius: 8px 8px 0 0; font-size: 13.500px; }
.dtab em { margin-left: 31px; color: #b4b9bf; font-size: 15px; }
.dtab-add { width: 24px; height: 25px; margin-left: 8px; background: #2a333e; color: #b4b9bf; text-align: center; line-height: 24px; font-size: 18px; border-radius: 6px 6px 0 0; }

/* viewport */
.viewport { height: 687px; flex: none; background: #000; position: relative; overflow: hidden; }
.canvas { position: absolute; left: 0; top: 0; }
.compass { font: 18px "Noto Sans CJK SC", sans-serif; fill: #9a9a9a; }
.w-label { font: 13px "Noto Sans", sans-serif; fill: #555; }
.vp-label { position: absolute; left: -5px; top: 4px; color: #c4c4c4; font-size: 14px; }
.dynlist { position: absolute; left: 563px; top: 407px; width: 121px; height: 187px; background: #9b9b9b; color: #2a2a2a; padding: 2px 0 0 3px; font-size: 13.500px; line-height: 18px; border: 1px solid #909090; }
.dynbox { position: absolute; left: 689px; top: 406px; width: 31px; height: 23px; background: #fff; padding: 3px 0 0 3px; }
.dynbox i { display: block; width: 15px; height: 17px; background: #1478d8; }

/* command line */
.cmd { flex: none; background: #1a1f26; padding-top: 4px; }
.cmd-hist { height: 41px; background: #c9c9c9; color: #333; padding-top: 3px; white-space: nowrap; overflow: hidden; }
.cmd-input { height: 21px; margin-top: 2px; background: #fff; color: #222; line-height: 21px; overflow: hidden; white-space: nowrap; }
.cmd-input span { display: block; margin-left: -4px; }

/* bottom bar */
.bottom { flex: 1; display: flex; flex-direction: column; background: #1f2730; padding-top: 3px; min-height: 0; }
.layouttabs { height: 21px; flex: none; display: flex; align-items: center; color: #aab0b6; }
.lt-tab { height: 20px; background: #2a333e; border-radius: 0 0 6px 6px; white-space: nowrap; }
.lt-tab.first { width: 31px; margin-left: 0; padding-left: 0; text-indent: -7px; }
.lt-tab:not(.first) { width: 57px; margin-left: 2px; padding-left: 12px; }
.lt-add { width: 26px; height: 20px; margin-left: 7px; background: #2a333e; text-align: center; font-size: 17px; color: #c3c8cd; line-height: 19px; border-radius: 0 0 6px 6px; }
.status { flex: none; height: 27px; margin-top: 3px; display: flex; padding-left: 1165px; }
.sg { height: 27px; background: #353f4b; display: flex; align-items: center; flex: none; }
.hl { width: 26px; height: 27px; background: #5b8fbf; display: flex; align-items: center; justify-content: center; flex: none; }
.g-model { width: 32px; color: #d6d9dc; font-weight: 700; font-size: 13px; justify-content: center; padding-left: 3px; white-space: nowrap; }
.g-grid { width: 72px; margin-left: 3px; padding-left: 3px; }
.g-draft { width: 190px; margin-left: 4px; }
.g-sel { width: 26px; margin-left: 3px; }
.g-anno { width: 118px; margin-left: 5px; color: #d0d4d8; }
.ratio { margin-left: 6px; font-size: 13px; }
.g-gear { width: 44px; margin-left: 5px; }
.g-plus { width: 27px; margin-left: 2px; color: #e6e8ea; font-size: 28px; font-weight: 300; justify-content: center; }
.g-last { width: 27px; margin-left: 5px; padding-left: 3px; }

/* taskbar */
.taskbar { height: 53px; flex: none; margin-bottom: 2px; padding-top: 2px; display: flex; align-items: center; padding-left: 693px; position: relative; background: linear-gradient(90deg, #e7d8d8 0%, #e8dede 25%, #e6e6e8 50%, #e6e8e6 100%); }
.win { width: 26px; height: 26px; }
.tsearch { width: 109px; height: 33px; margin-left: 18px; background: #f5f6f7; border-radius: 17px; display: flex; align-items: center; padding-left: 32px; color: #333; }
.tmag { width: 15px; height: 15px; margin-right: 6px; margin-left: 0; }
.tapp { width: 26px; height: 26px; }
.xl { font: 700 12px "Liberation Sans", sans-serif; fill: #fff; }
.acad { width: 42px; height: 42px; margin-left: 15px; background: #eef0f1; border-radius: 4px; position: relative; display: flex; justify-content: center; }
.acad::before { content: ""; position: absolute; left: 8px; top: 8px; width: 16px; height: 24px; background: #f4dcd8; }
.acad-a { color: #c82a2e; font: 700 32px/40px "Liberation Sans", sans-serif; position: relative; }
.acad i { position: absolute; left: 12px; bottom: 0; width: 18px; height: 3px; background: #1c74bd; border-radius: 2px; }
.bili { width: 27px; height: 27px; margin-left: 15px; position: relative; }
.bili svg { width: 27px; height: 27px; }
.bili i { position: absolute; left: 11px; top: 31px; width: 6px; height: 3px; background: #8c8f94; border-radius: 2px; }
.tray { display: flex; align-items: center; margin-left: auto; padding-right: 4px; }
.chev { width: 14px; height: 8px; }
.t360 { width: 18px; height: 18px; margin-left: 11px; }
.ime { margin-left: 12px; font-size: 17px; color: #777; }
.sogou { width: 18px; height: 18px; margin-left: 25px; }
.sg-s { font: 700 14px "Liberation Sans", sans-serif; fill: #fff; }
.wifi { width: 18px; height: 14px; margin-left: 25px; }
.spk { width: 16px; height: 14px; margin-left: 8px; }
.bat { width: 18px; height: 16px; margin-left: 11px; }
```
